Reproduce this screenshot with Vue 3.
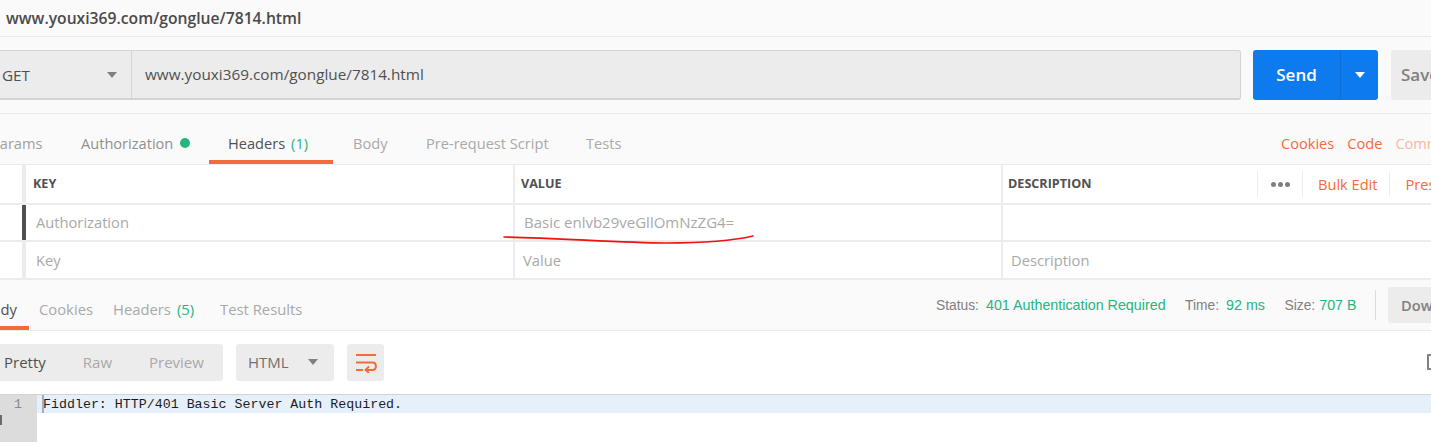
<template>
  <div class="app">
    <div class="title">www.youxi369.com/gonglue/7814.html</div>

    <div class="request">
      <div class="field">
        <div class="method"><span>GET</span><i class="caret"></i></div>
        <div class="url">www.youxi369.com/gonglue/7814.html</div>
      </div>
      <div class="send">
        <span class="send-label">Send</span>
        <span class="send-more"><i class="caret white"></i></span>
      </div>
      <div class="save">Save</div>
    </div>

    <div class="tabs">
      <span class="tab t-params">Params</span>
      <span class="tab t-auth">Authorization<i class="dot"></i></span>
      <span class="tab t-headers active">Headers<em>(1)</em></span>
      <span class="tab t-body">Body</span>
      <span class="tab t-pre">Pre-request Script</span>
      <span class="tab t-tests">Tests</span>
      <span class="tabs-right">
        <span class="link">Cookies</span>
        <span class="link">Code</span>
        <span class="link faded">Comments</span>
      </span>
    </div>

    <div class="table">
      <div class="row head">
        <div class="handle"></div>
        <div class="cell key">KEY</div>
        <div class="cell val">VALUE</div>
        <div class="cell desc">
          <span class="desc-title">DESCRIPTION</span>
          <span class="tools">
            <span class="dots"><b></b><b></b><b></b></span>
            <span class="tool">Bulk Edit</span>
            <span class="tool">Presets</span>
          </span>
        </div>
      </div>
      <div v-for="r in rows" :key="r.k" class="row" :class="r.cls">
        <div class="handle" :class="{ dark: r.dark }"></div>
        <div class="cell key">{{ r.k }}</div>
        <div class="cell val">{{ r.v }}</div>
        <div class="cell desc">{{ r.d }}</div>
      </div>
      <svg class="scribble" width="270" height="20" viewBox="0 0 270 20">
        <path d="M3 7 C60 8 120 13 165 13 C205 13 235 10 252 6" fill="none" stroke="#f01010" stroke-width="1.6" stroke-linecap="round" />
      </svg>
    </div>

    <div class="resbar">
      <span class="rtab active">Body</span>
      <span class="rtab">Cookies</span>
      <span class="rtab wide">Headers<em>(5)</em></span>
      <span class="rtab">Test Results</span>
      <span class="meta">
        <span class="m">Status:<b>401 Authentication Required</b></span>
        <span class="m">Time:<b>92 ms</b></span>
        <span class="m size">Size:<b>707 B</b></span>
        <span class="sep"></span>
        <span class="download">Download</span>
      </span>
    </div>

    <div class="toolbar">
      <div class="seg">
        <span class="on">Pretty</span>
        <span>Raw</span>
        <span>Preview</span>
      </div>
      <div class="lang"><span>HTML</span><i class="caret"></i></div>
      <div class="wrap">
        <svg width="22" height="20" viewBox="0 0 22 20">
          <path d="M1 2H21M1 9.500H17.500C22 9.500 22 17 17.500 17H11M1 17H8" fill="none" stroke="#f26b3a" stroke-width="2" />
          <path d="M14 13.500L10.500 17L14 20" fill="none" stroke="#f26b3a" stroke-width="1.800" />
        </svg>
      </div>
      <span class="copy"></span>
    </div>

    <div class="code">
      <div class="gutter">
        <div class="num">1</div>
        <i class="fold"></i>
      </div>
      <div class="lines">
        <div class="line"><i class="cursor"></i>Fiddler: HTTP/401 Basic Server Auth Required.</div>
      </div>
    </div>
  </div>
</template>

<script setup>
const rows = [
  { k: 'Authorization', v: 'Basic enlvb29veGllOmNzZG4=', d: '', dark: true, cls: 'first' },
  { k: 'Key', v: 'Value', d: 'Description', dark: false, cls: 'second' }
]
</script>

<style>
html, body { margin: 0; background: #fafafa; overflow: hidden; }
</style>

<style scoped>
.app {
  width: 1431px;
  height: 442px;
  overflow: hidden;
  background: #fafafa;
  font-family: "Open Sans", "Liberation Sans", sans-serif;
  font-size: 14.600px;
  color: #505050;
  display: flex;
  flex-direction: column;
  position: relative;
}
.app i, .app em { font-style: normal; }

.title {
  height: 36px;
  flex: none;
  line-height: 36px;
  padding-left: 6px;
  font-size: 15.700px;
  font-weight: 600;
  color: #4a4a4a;
  border-bottom: 1px solid #ececec;
  white-space: nowrap;
}

.request {
  height: 77px;
  flex: none;
  box-sizing: border-box;
  padding-top: 13px;
  border-bottom: 1px solid #ececec;
  display: flex;
  align-items: flex-start;
  margin-left: -40px;
  width: 1600px;
}
.field {
  width: 1281px;
  height: 50px;
  flex: none;
  box-sizing: border-box;
  display: flex;
  background: #ececec;
  border: 1px solid #d4d4d4;
  border-width: 1px 1px 2px 1px;
  border-radius: 3px;
}
.method {
  width: 171px;
  flex: none;
  box-sizing: border-box;
  padding-left: 41px;
  padding-right: 14px;
  display: flex;
  align-items: center;
  justify-content: space-between;
  border-right: 1px solid #d4d4d4;
  font-size: 15.300px;
  color: #505050;
}
.caret {
  display: block;
  width: 0;
  height: 0;
  border-left: 5px solid transparent;
  border-right: 5px solid transparent;
  border-top: 6px solid #808080;
}
.caret.white { border-top-color: #fff; }
.url {
  flex: 1;
  padding-left: 13px;
  line-height: 47px;
  font-size: 15.300px;
  color: #505050;
  white-space: nowrap;
}
.send {
  margin-left: 12px;
  width: 125px;
  height: 50px;
  flex: none;
  display: flex;
  background: #0d7bee;
  border-radius: 3px;
  color: #fff;
}
.send-label {
  width: 87px;
  text-align: center;
  line-height: 50px;
  font-size: 17px;
  font-weight: 600;
}
.send-more {
  flex: 1;
  display: flex;
  align-items: center;
  justify-content: center;
  border-left: 1px solid #0b6fd8;
}
.save {
  margin-left: 13px;
  width: 90px;
  height: 50px;
  flex: none;
  line-height: 50px;
  padding-left: 10px;
  box-sizing: border-box;
  background: #ececec;
  border-radius: 3px;
  font-size: 17px;
  font-weight: 600;
  color: #808080;
}

.tabs {
  height: 50px;
  flex: none;
  display: flex;
  align-items: flex-start;
  line-height: 58px;
  font-size: 14.600px;
  color: #a9a9a9;
  white-space: nowrap;
}
.tab { display: block; height: 50px; box-sizing: border-box; }
.t-params { margin-left: -9px; width: 90px; color: #a0a0a0; }
.t-auth { width: 128px; color: #909090; display: flex; }
.dot {
  width: 10px;
  height: 10px;
  border-radius: 50%;
  background: #26b47f;
  margin: 24px 0 0 7px;
}
.t-headers {
  width: 124px;
  padding-left: 19px;
  color: #505050;
  border-bottom: 4px solid #f26b3a;
}
.t-headers em, .rtab em { color: #26b47f; margin-left: 6px; }
.t-body { margin-left: 20px; width: 73px; }
.t-pre { width: 160px; }
.tabs-right {
  margin-left: auto;
  display: flex;
  gap: 13px;
  width: 150px;
}
.link { color: #f26b3a; }
.faded { opacity: .45; }

.table {
  flex: none;
  position: relative;
  border-top: 1px solid #ececec;
  background: #fff;
}
.row {
  display: flex;
  height: 36px;
  border-bottom: 2px solid #ececec;
  background: #fff;
}
.row.head { height: 38px; }
.row.first { height: 35px; }
.handle {
  width: 22px;
  flex: none;
  border-right: 4px solid #ececec;
}
.handle.dark { border-right-color: #505050; }
.cell {
  box-sizing: border-box;
  line-height: 35px;
  font-size: 14.700px;
  color: #a9a9a9;
  white-space: nowrap;
  overflow: hidden;
}
.second .cell { line-height: 37px; }
.first .val { font-size: 15px; }
.row .key { width: 487px; flex: none; padding-left: 10px; }
.row .val { width: 488px; flex: none; padding-left: 8px; border-left: 2px solid #ececec; }
.row .desc { flex: 1; padding-left: 8px; border-left: 2px solid #ececec; }
.row:not(.head) .val { padding-left: 8px; }
.row.first .val { padding-left: 9px; }
.row:not(.head) .desc { padding-left: 8px; }
.head .cell { font-size: 12.600px; font-weight: 700; color: #505050; line-height: 38px; }
.head .desc { display: flex; padding-left: 5px; }
.head .val { padding-left: 6px; }
.head .key { padding-left: 7px; }
.desc-title { width: 249px; flex: none; }
.tools { display: flex; align-items: center; }
.dots {
  display: flex;
  gap: 2px;
  width: 46px;
  height: 26px;
  box-sizing: border-box;
  justify-content: center;
  align-items: center;
  border-right: 1px solid #ececec;
  border-left: 1px solid #ececec;
}
.dots b { width: 5px; height: 5px; border-radius: 50%; background: #808080; }
.tool {
  font-size: 14.600px;
  font-weight: 400;
  color: #f26b3a;
  line-height: 26px;
  padding: 0 12px 0 15px;
  border-right: 1px solid #ececec;
}
.tool:last-child { border: 0; }
.scribble {
  position: absolute;
  left: 501px;
  top: 65px;
  pointer-events: none;
}

.resbar {
  height: 50px;
  flex: none;
  border-bottom: 1px solid #ececec;
  display: flex;
  margin-left: -18px;
  font-size: 14.800px;
  line-height: 58px;
  color: #a9a9a9;
  white-space: nowrap;
}
.rtab { margin-right: 20px; height: 50px; box-sizing: border-box; }
.rtab.wide { margin-right: 26px; }
.rtab.active { color: #505050; border-bottom: 4px solid #f26b3a; width: 47px; margin-right: 10px; }
.meta {
  position: absolute;
  left: 936px;
  top: 280px;
  display: flex;
  font-family: "Liberation Sans", sans-serif;
  font-size: 13.800px;
  line-height: 50px;
  color: #808080;
}
.m { margin-right: 19.500px; }
.m b { font-weight: 400; font-size: 14.300px; color: #26b47f; margin-left: 7px; }
.m.size b { margin-left: 4px; }
.sep { width: 1px; height: 30px; background: #dcdcdc; margin: 10px 12px 0 -1px; }
.download {
  margin-top: 7px;
  width: 80px;
  height: 36px;
  line-height: 36px;
  border-radius: 3px;
  background: #ececec;
  padding-left: 13px;
  font-family: "Open Sans", sans-serif;
  font-size: 14.600px;
  font-weight: 600;
}

.toolbar {
  height: 64px;
  flex: none;
  background: #fff;
  display: flex;
  align-items: flex-start;
  padding-top: 13px;
  box-sizing: border-box;
  border-bottom: 1px solid #d4d4d4;
  position: relative;
}
.seg {
  margin-left: -10px;
  width: 233px;
  height: 37px;
  padding-left: 14px;
  box-sizing: border-box;
  background: #ececec;
  border-radius: 3px;
  display: flex;
  line-height: 36px;
  font-size: 15px;
  color: #a9a9a9;
}
.seg span { margin-right: 37px; }
.seg .on { color: #505050; }
.lang {
  margin-left: 13px;
  width: 98px;
  height: 37px;
  box-sizing: border-box;
  background: #ececec;
  border-radius: 3px;
  padding: 0 16px 2px 12px;
  font-size: 15px;
  display: flex;
  align-items: center;
  justify-content: space-between;
  color: #707070;
}
.wrap {
  margin-left: 13px;
  width: 37px;
  height: 37px;
  background: #ececec;
  border-radius: 3px;
  display: flex;
  align-items: center;
  justify-content: center;
}
.copy {
  position: absolute;
  left: 1427px;
  top: 23px;
  width: 6px;
  height: 12px;
  border: 2px solid #808080;
  border-radius: 1px;
}

.code {
  flex: 1;
  display: flex;
  background: #fff;
}
.gutter {
  width: 37px;
  flex: none;
  background: #dcdcdc;
  position: relative;
}
.num {
  font-family: "Liberation Mono", monospace;
  font-size: 13.300px;
  line-height: 20px;
  color: #8a8a8a;
  padding-left: 14px;
}
.fold {
  position: absolute;
  left: 0;
  top: 20px;
  width: 2px;
  height: 10px;
  background: #6a6a6a;
}
.lines { flex: 1; }
.line {
  height: 18px;
  line-height: 20px;
  background: #e6f0fb;
  font-family: "Liberation Mono", monospace;
  font-size: 13.300px;
  color: #1c1c1c;
  padding-left: 6px;
  position: relative;
  white-space: pre;
}
.cursor {
  position: absolute;
  left: 5px;
  top: 0;
  width: 2px;
  height: 18px;
  background: #9db0c4;
}
</style>
